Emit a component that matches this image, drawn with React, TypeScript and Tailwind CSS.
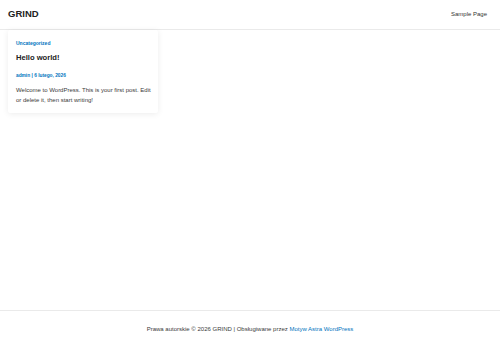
import React from "react";

export default function App() {
  return (
    <div className="flex h-[348px] w-[500px] flex-col bg-white font-['Liberation_Sans',Arial,sans-serif] text-[#3a3a3a]">
      {/* Header */}
      <header className="flex h-[30px] items-center justify-between border-b border-[#eaeaea] px-2">
        <span className="text-[9.5px] font-bold text-[#222]">GRIND</span>
        <nav className="pr-[5px] text-[6px] text-[#333]">Sample Page</nav>
      </header>

      {/* Content */}
      <main className="flex-1 px-2">
        <article className="w-[150px] rounded-[2px] bg-white pb-[8px] pl-2 pr-[4px] pt-[9px] shadow-[0_1px_6px_rgba(0,0,0,0.08)]">
          <a className="block text-[5px] font-bold leading-[8px] text-[#0274be]">Uncategorized</a>
          <h2 className="mt-[6px] text-[7.6px] font-bold leading-[10px] text-[#222]">Hello world!</h2>
          <p className="mt-[9px] text-[4.8px] font-bold leading-[8px] text-[#0274be]">admin | 6 lutego, 2026</p>
          <p className="mt-[5px] text-[6px] leading-[10px] text-[#3a3a3a]">
            Welcome to WordPress. This is your first post. Edit or delete it, then start writing!
          </p>
        </article>
      </main>

      {/* Footer */}
      <footer className="flex h-[38px] items-center justify-center border-t border-[#eaeaea] text-[6px] text-[#3a3a3a]">
        <span>
          Prawa autorskie © 2026 GRIND | Obsługiwane przez{" "}
          <a className="text-[#0274be]">Motyw Astra WordPress</a>
        </span>
      </footer>
    </div>
  );
}
